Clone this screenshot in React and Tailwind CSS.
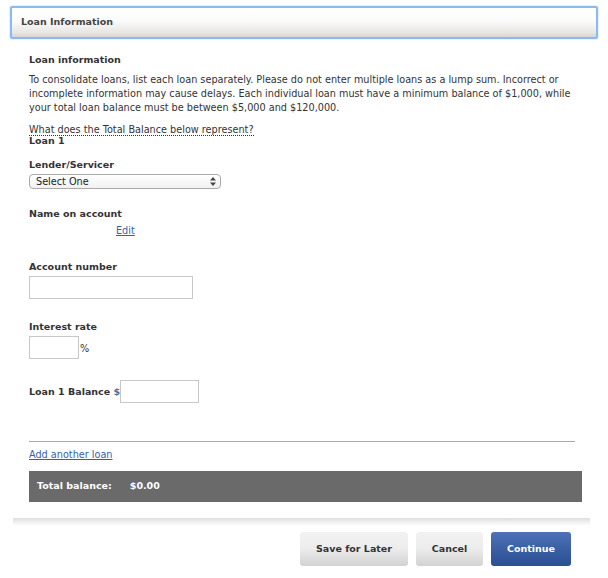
import React from 'react';

const font = { fontFamily: '"DejaVu Sans", Verdana, sans-serif' };

const Label = ({ children, className = '' }) => (
    <div className={`text-[9.5px] font-bold text-[#333] leading-[14px] ${className}`}>{children}</div>
);

const LoanForm = () => {
    return (
        <div className="w-[608px] h-[578px] bg-white text-[#333] overflow-hidden" style={font}>
            <div className="pt-[6px] px-[10px]">
                <div className="h-[33px] border-2 border-[#8cb9f2] rounded-[2px] bg-[linear-gradient(#ffffff_0%,#fbfbfa_45%,#e7e6e2_85%,#d6d5d2_100%)] flex items-center pl-[9px] shadow-[0_0_2px_#a9cdf7]">
                    <span className="text-[9.5px] font-bold text-[#444]">Loan Information</span>
                </div>
            </div>

            <div className="px-[29px] pt-[14px]">
                <Label>Loan information</Label>
                <p className="mt-[6px] text-[9.7px] leading-[14px] text-[#333] whitespace-nowrap">
                    To consolidate loans, list each loan separately. Please do not enter multiple loans as a lump sum. Incorrect or<br />
                    incomplete information may cause delays. Each individual loan must have a minimum balance of $1,000, while<br />
                    your total loan balance must be between $5,000 and $120,000.
                </p>
                <div className="mt-[9px] text-[9.7px] leading-[12px]">
                    <span className="border-b border-dotted border-[#333]">What does the Total Balance below represent?</span>
                </div>
                <Label className="-mt-[2px]">Loan 1</Label>

                <Label className="mt-[10px]">Lender/Servicer</Label>
                <div className="mt-[2px] w-[192px] h-[15px] border border-[#aaa] rounded-[4px] bg-[linear-gradient(#fff,#f1f1f1)] flex items-center justify-between pl-[6px] pr-[4px]">
                    <span className="text-[9.7px] leading-none text-[#222]">Select One</span>
                    <svg width="6" height="9" viewBox="0 0 6 9">
                        <path d="M3 0 L6 3.5 H0 Z M3 9 L0 5.5 H6 Z" fill="#444" />
                    </svg>
                </div>

                <Label className="mt-[18px]">Name on account</Label>
                <div className="mt-[3px] pl-[87px] text-[9.7px] leading-[14px]">
                    <a className="text-[#3a5fa8] underline">Edit</a>
                </div>

                <Label className="mt-[22px]">Account number</Label>
                <div className="mt-[2px] w-[164px] h-[23px] border border-[#c8c8c8]" />

                <Label className="mt-[21px]">Interest rate</Label>
                <div className="mt-[2px] flex items-end">
                    <div className="w-[50px] h-[23px] border border-[#c8c8c8]" />
                    <span className="text-[9.7px] leading-[14px] mb-[3px] ml-[1px]">%</span>
                </div>

                <div className="mt-[21px] flex items-center">
                    <Label>Loan 1 Balance <span className="text-[#4a6fa5]">$</span></Label>
                    <div className="w-[79px] h-[23px] border border-[#c8c8c8]" />
                </div>

                <div className="mt-[38px] mr-[4px] h-px bg-[#aaa]" />
                <div className="mt-[6px] text-[9.7px] leading-[14px]">
                    <a className="text-[#3a5fa8] underline">Add another loan</a>
                </div>
                <div className="mt-[9px] -mr-[3px] h-[31px] bg-[#6a6a6a] flex items-center pl-[8px] gap-[18px] text-white text-[9.5px] font-bold">
                    <span>Total balance:</span>
                    <span>$0.00</span>
                </div>
            </div>

            <div className="mt-[16px] ml-[13px] mr-[18px] h-[8px] bg-[linear-gradient(#dedede,#f6f6f6_70%,#ffffff)]" />

            <div className="mt-[6px] flex justify-end gap-[8px] pr-[37px]">
                <button className="w-[108px] h-[34px] rounded-[3px] bg-[linear-gradient(#f2f2f2_0%,#ececec_50%,#d2d2d2_100%)] text-[9.5px] font-bold text-[#333]" style={font}>
                    Save for Later
                </button>
                <button className="w-[67px] h-[34px] rounded-[3px] bg-[linear-gradient(#f2f2f2_0%,#ececec_50%,#d2d2d2_100%)] text-[9.5px] font-bold text-[#333]" style={font}>
                    Cancel
                </button>
                <button className="w-[80px] h-[34px] rounded-[3px] bg-[linear-gradient(#4d72b8_0%,#3b5fa3_50%,#2b4f93_100%)] text-[9.5px] font-bold text-white" style={font}>
                    Continue
                </button>
            </div>
        </div>
    );
};

export default LoanForm;
